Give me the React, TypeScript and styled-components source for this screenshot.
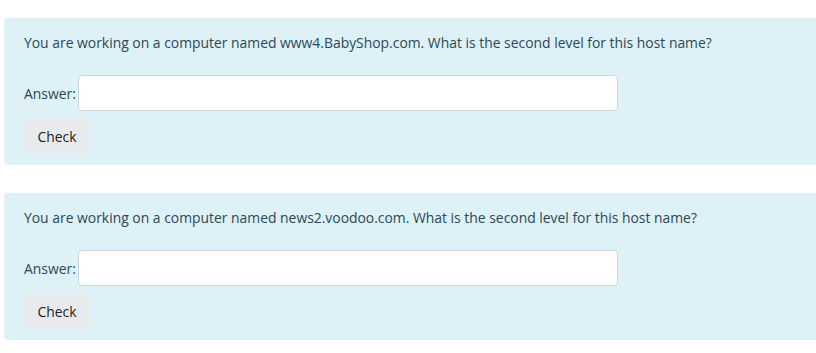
import styled, { createGlobalStyle } from 'styled-components';

const GlobalStyle = createGlobalStyle`
  html, body {
    margin: 0;
    padding: 0;
    overflow: hidden;
    background: #ffffff;
  }
  body {
    font-family: 'Open Sans', 'Noto Sans', sans-serif;
  }
`;

const questions = [
  'You are working on a computer named www4.BabyShop.com. What is the second level for this host name?',
  'You are working on a computer named news2.voodoo.com. What is the second level for this host name?',
];

const App = () => {
  return (
    <Page>
      <GlobalStyle />
      {questions.map((text, i) => (
        <Card key={i}>
          <QuestionText>{text}</QuestionText>
          <AnswerRow>
            <Label htmlFor={`answer-${i}`}>Answer:</Label>
            <Input id={`answer-${i}`} type='text' />
          </AnswerRow>
          <Button type='button'>Check</Button>
        </Card>
      ))}
    </Page>
  );
};

const Page = styled.div`
  display: flex;
  flex-direction: column;
  gap: 28px;
  padding: 18px 0 0 4px;
  width: 840px;
`;

const Card = styled.div`
  background: #def1f7;
  border-radius: 4px;
  padding: 14px 20px 11px;
  display: flex;
  flex-direction: column;
  align-items: flex-start;
`;

const QuestionText = styled.div`
  font-size: 13.9px;
  line-height: 22px;
  color: #2b4856;
  margin-bottom: 21px;
  white-space: nowrap;
`;

const AnswerRow = styled.div`
  display: flex;
  align-items: center;
  gap: 2px;
  height: 36px;
`;

const Label = styled.label`
  font-size: 13.9px;
  color: #2b4856;
`;

const Input = styled.input`
  box-sizing: border-box;
  width: 540px;
  height: 36px;
  border: 1px solid #ced4da;
  border-radius: 4px;
  background: #ffffff;
  padding: 0 10px;
  font: inherit;
  outline: none;
`;

const Button = styled.button`
  margin-top: 7px;
  box-sizing: border-box;
  width: 66px;
  height: 36px;
  border: none;
  border-radius: 4px;
  background: #e8ebee;
  color: #1d2125;
  font-family: 'Open Sans', 'Noto Sans', sans-serif;
  font-size: 13.9px;
  padding: 0;
  cursor: pointer;
`;

export default App;
